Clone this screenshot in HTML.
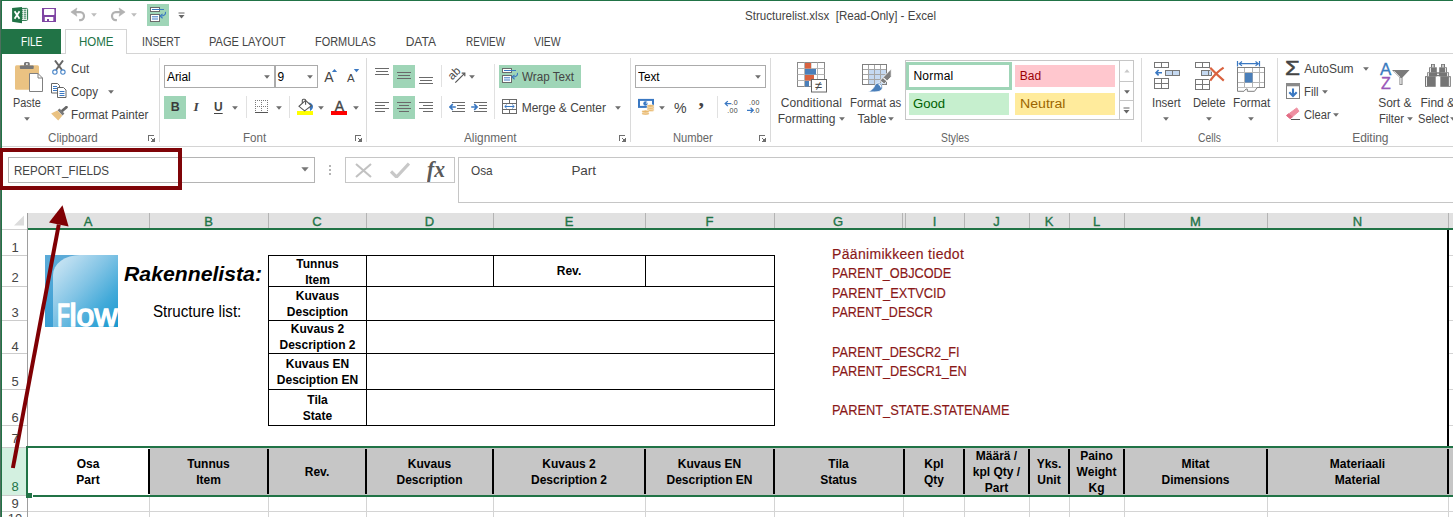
<!DOCTYPE html>
<html lang="en"><head><meta charset="utf-8"><title>Structurelist.xlsx [Read-Only] - Excel</title><style>
html,body{margin:0;padding:0;background:#fff;}
body{width:1453px;height:517px;overflow:hidden;position:relative;font-family:"Liberation Sans",sans-serif;}
.b{position:absolute;box-sizing:border-box;display:block;}
.t{position:absolute;white-space:pre;line-height:normal;display:block;}
</style></head>
<body>
<div class="b" style="left:0px;top:0px;width:1453px;height:1px;background:#217346;"></div>
<div class="b" style="left:0px;top:0px;width:1px;height:517px;background:#4d6f5d;"></div>
<div class="b" style="left:1px;top:0px;width:1px;height:517px;background:#217346;"></div>
<svg class="b" style="left:12px;top:7px;" width="17" height="17" viewBox="0 0 17 17"><rect x="9" y="1.400" width="6.600" height="12" rx="1" fill="#fff" stroke="#217346" stroke-width="1"/><g fill="#217346"><rect x="9.9" y="2.7" width="1.4" height="1"/><rect x="12" y="2.7" width="2.3" height="1"/><rect x="9.9" y="4.7" width="1.4" height="1"/><rect x="12" y="4.7" width="2.3" height="1"/><rect x="9.9" y="6.7" width="1.4" height="1"/><rect x="12" y="6.7" width="2.3" height="1"/><rect x="9.9" y="8.6" width="1.4" height="1"/><rect x="12" y="8.6" width="2.3" height="1"/><rect x="9.9" y="10.6" width="1.4" height="1"/><rect x="12" y="10.6" width="2.3" height="1"/></g><path d="M0.100 1 L10 0 V16.200 L0.100 14.800Z" fill="#217346"/><path d="M2.600 4.200 L7.500 11.700 M7.500 4.200 L2.600 11.700" stroke="#fff" stroke-width="1.800" fill="none"/></svg>
<svg class="b" style="left:42px;top:8px;" width="14" height="14" viewBox="0 0 14 14"><path d="M0 0h14v14H0z" fill="#7f45a3"/><rect x="2" y="1.100" width="10.400" height="5.800" rx="0.600" fill="#fff"/><rect x="2.800" y="9" width="8.500" height="4" fill="#fff"/><rect x="5" y="11" width="2" height="2" fill="#7f45a3"/></svg>
<svg class="b" style="left:70px;top:7px;" width="16" height="15" viewBox="0 0 16 15"><path d="M4 5.100 H10.300 A3.700 4 0 0 1 10.300 13.100 H9.100" fill="none" stroke="#b2b2b2" stroke-width="2.200"/><path d="M0.900 5.100 L6.900 1 L5.800 5.100 L6.900 9.200Z" fill="#b2b2b2" stroke="#b2b2b2" stroke-width="0.600" stroke-linejoin="round"/></svg>
<svg class="b" style="left:91px;top:13px;" width="6" height="4" viewBox="0 0 6 4"><path d="M0.1 0.3h5.8l-2.9 3.4z" fill="#bdbdbd"/></svg>
<svg class="b" style="left:110px;top:7px;" width="16" height="15" viewBox="0 0 16 15"><path d="M12 5.100 H5.700 A3.700 4 0 0 0 5.700 13.100 H6.900" fill="none" stroke="#b2b2b2" stroke-width="2.200"/><path d="M15.100 5.100 L9.100 1 L10.200 5.100 L9.100 9.200Z" fill="#b2b2b2" stroke="#b2b2b2" stroke-width="0.600" stroke-linejoin="round"/></svg>
<svg class="b" style="left:131px;top:13px;" width="6" height="4" viewBox="0 0 6 4"><path d="M0.1 0.3h5.8l-2.9 3.4z" fill="#bdbdbd"/></svg>
<div class="b" style="left:147px;top:4px;width:22px;height:22px;background:#9fd5b7;"></div>
<svg class="b" style="left:150px;top:7px;" width="17" height="16" viewBox="0 0 17 16"><rect x="0.5" y="0.5" width="9" height="4" fill="#fff" stroke="#6a6a6a"/><rect x="0.5" y="7.5" width="9" height="7" fill="#fff" stroke="#6a6a6a"/><path d="M2 2.5h12 M2 9.8h6 M2 12h6" stroke="#3a78c2" stroke-width="1" fill="none"/><path d="M15.5 4.8 C15.9 7.4 14.2 9 10.6 9.1" stroke="#3a78c2" stroke-width="1.1" fill="none"/><path d="M12.6 6.900 L10 9.100 L12.600 11.200" stroke="#3a78c2" stroke-width="1.100" fill="none"/></svg>
<svg class="b" style="left:178px;top:12px;" width="7" height="7" viewBox="0 0 7 7"><path d="M0.5 1h6" stroke="#666" stroke-width="1"/><path d="M0.5 3h6l-3 3.5z" fill="#666"/></svg>
<div class="b" style="left:2px;top:53px;width:1451px;height:1px;background:#d4d4d4;"></div>
<div class="b" style="left:2px;top:29px;width:59px;height:25px;background:#217346;"></div>
<div class="b" style="left:65px;top:29px;width:62px;height:25px;background:#fff;border:1px solid #d4d4d4;border-bottom:none;"></div>
<div class="b" style="left:2px;top:146px;width:1451px;height:1px;background:#d4d4d4;"></div>
<div class="b" style="left:159px;top:58px;width:1px;height:84px;background:#dadada;"></div>
<div class="b" style="left:366px;top:58px;width:1px;height:84px;background:#dadada;"></div>
<div class="b" style="left:630px;top:58px;width:1px;height:84px;background:#dadada;"></div>
<div class="b" style="left:770px;top:58px;width:1px;height:84px;background:#dadada;"></div>
<div class="b" style="left:1141px;top:58px;width:1px;height:84px;background:#dadada;"></div>
<div class="b" style="left:1277px;top:58px;width:1px;height:84px;background:#dadada;"></div>
<svg class="b" style="left:148px;top:135px;" width="7" height="7" viewBox="0 0 7 7"><g fill="#6e6e6e" shape-rendering="crispEdges"><rect x="0" y="0" width="6" height="1"/><rect x="0" y="0" width="1" height="6"/><rect x="3" y="3" width="1" height="1"/><rect x="4" y="4" width="2" height="2"/><rect x="6" y="3" width="1" height="4"/><rect x="3" y="6" width="4" height="1"/></g></svg>
<svg class="b" style="left:355px;top:135px;" width="7" height="7" viewBox="0 0 7 7"><g fill="#6e6e6e" shape-rendering="crispEdges"><rect x="0" y="0" width="6" height="1"/><rect x="0" y="0" width="1" height="6"/><rect x="3" y="3" width="1" height="1"/><rect x="4" y="4" width="2" height="2"/><rect x="6" y="3" width="1" height="4"/><rect x="3" y="6" width="4" height="1"/></g></svg>
<svg class="b" style="left:619px;top:135px;" width="7" height="7" viewBox="0 0 7 7"><g fill="#6e6e6e" shape-rendering="crispEdges"><rect x="0" y="0" width="6" height="1"/><rect x="0" y="0" width="1" height="6"/><rect x="3" y="3" width="1" height="1"/><rect x="4" y="4" width="2" height="2"/><rect x="6" y="3" width="1" height="4"/><rect x="3" y="6" width="4" height="1"/></g></svg>
<svg class="b" style="left:759px;top:135px;" width="7" height="7" viewBox="0 0 7 7"><g fill="#6e6e6e" shape-rendering="crispEdges"><rect x="0" y="0" width="6" height="1"/><rect x="0" y="0" width="1" height="6"/><rect x="3" y="3" width="1" height="1"/><rect x="4" y="4" width="2" height="2"/><rect x="6" y="3" width="1" height="4"/><rect x="3" y="6" width="4" height="1"/></g></svg>
<svg class="b" style="left:14px;top:62px;" width="30" height="30" viewBox="0 0 30 30"><rect x="1" y="3.3" width="24" height="24.400" rx="1.500" fill="#eac282"/><rect x="5.900" y="3.500" width="13.800" height="3.500" rx="0.800" fill="#777"/><path d="M10 3.800V1.600a1.500 1.500 0 0 1 1.500-1.500h2.800a1.500 1.500 0 0 1 1.500 1.500V3.800z" fill="#777"/><rect x="12" y="1.300" width="1.800" height="1.500" fill="#fff"/><path d="M15.500 11.500h8.500l4.500 4.500V29.500h-13z" fill="#fff" stroke="#808080"/><path d="M24 11.500v4.500h4.500" fill="none" stroke="#808080"/></svg>
<svg class="b" style="left:24px;top:117px;" width="6" height="4" viewBox="0 0 6 4"><path d="M0.1 0.3h5.8l-2.9 3.4z" fill="#6e6e6e"/></svg>
<svg class="b" style="left:51px;top:60px;" width="16" height="15" viewBox="0 0 16 15"><path d="M4 0.5 L11 10 M12 0.5 L5 10" stroke="#666" stroke-width="2" fill="none"/><circle cx="3.900" cy="12.100" r="2.200" fill="none" stroke="#4a86c8" stroke-width="1.100"/><circle cx="11.900" cy="12.100" r="2.200" fill="none" stroke="#4a86c8" stroke-width="1.100"/></svg>
<svg class="b" style="left:51px;top:83px;" width="16" height="15" viewBox="0 0 16 15"><path d="M0.5 0.5h6l2 2v7.5h-8z" fill="#fff" stroke="#666"/><path d="M2 3.5h4M2 5.5h4M2 7.5h4" stroke="#3a78c2"/><path d="M6.5 4.5h6l2.5 2.5v7.5h-8.5z" fill="#fff" stroke="#666"/><path d="M8.5 8.5h5M8.5 10.5h5M8.5 12.5h5" stroke="#3a78c2"/></svg>
<svg class="b" style="left:108px;top:90px;" width="6" height="4" viewBox="0 0 6 4"><path d="M0.1 0.3h5.8l-2.9 3.4z" fill="#6e6e6e"/></svg>
<svg class="b" style="left:51px;top:106px;" width="17" height="16" viewBox="0 0 17 16"><path d="M11.300 4.700 L15.400 1.200" stroke="#666" stroke-width="2.800" stroke-linecap="round"/><path d="M6.500 4.300 L8.600 2.400 L13.400 7.600 L11.500 9.500Z" fill="#7a7a7a"/><path d="M0.100 7.400 L6.300 4.500 L11.300 9.700 L7.200 14.600Z" fill="#eac282"/></svg>
<div class="b" style="left:164px;top:65px;width:111px;height:23px;background:#fff;border:1px solid #ababab;"></div>
<div class="b" style="left:275px;top:65px;width:43px;height:23px;background:#fff;border:1px solid #ababab;"></div>
<svg class="b" style="left:264px;top:75px;" width="6" height="4" viewBox="0 0 6 4"><path d="M0.1 0.3h5.8l-2.9 3.4z" fill="#6e6e6e"/></svg>
<svg class="b" style="left:307px;top:75px;" width="6" height="4" viewBox="0 0 6 4"><path d="M0.1 0.3h5.8l-2.9 3.4z" fill="#6e6e6e"/></svg>
<svg class="b" style="left:331px;top:69px;" width="7" height="4" viewBox="0 0 7 4"><path d="M0.900 3.100h5.200l-2.600-3.100z" fill="#3a78c2"/></svg>
<svg class="b" style="left:353px;top:69px;" width="7" height="4" viewBox="0 0 7 4"><path d="M0.800 0h5.400l-2.700 3.200z" fill="#3a78c2"/></svg>
<div class="b" style="left:164px;top:96px;width:22px;height:23px;background:#9fd5b7;"></div>
<svg class="b" style="left:232px;top:106px;" width="6" height="4" viewBox="0 0 6 4"><path d="M0.1 0.3h5.8l-2.9 3.4z" fill="#6e6e6e"/></svg>
<div class="b" style="left:246px;top:96px;width:1px;height:22px;background:#e1e1e1;"></div>
<svg class="b" style="left:255px;top:100px;" width="14" height="14" viewBox="0 0 14 14"><g shape-rendering="crispEdges" fill="none" stroke="#7a7a7a" stroke-width="1" stroke-dasharray="1 1"><path d="M0 0.500h13M0 6.500h13M0.500 0v12M6.500 0v12M12.500 0v12"/></g><rect x="0" y="12" width="13" height="1" fill="#555" shape-rendering="crispEdges"/></svg>
<svg class="b" style="left:276px;top:106px;" width="6" height="4" viewBox="0 0 6 4"><path d="M0.1 0.3h5.8l-2.9 3.4z" fill="#6e6e6e"/></svg>
<div class="b" style="left:289px;top:96px;width:1px;height:22px;background:#e1e1e1;"></div>
<svg class="b" style="left:297px;top:98px;" width="17" height="18" viewBox="0 0 17 18"><rect x="0" y="13" width="16" height="4" fill="#ffff00"/><path d="M11.800 4.600 C15.200 5.200 16.800 7.800 15.700 10.200 C15.200 11.400 14.300 12.300 13.200 12.900 Z" fill="#3a78c2"/><path d="M8.500 2.400 L14.400 7.800 L7.600 12.900 L2 8.300Z" fill="#fff" stroke="#555" stroke-width="1.100"/><path d="M5.300 5.200V2.300a1 1 0 0 1 1-1h1.300a1 1 0 0 1 1 1V6.800" fill="none" stroke="#555" stroke-width="1.100"/></svg>
<svg class="b" style="left:318px;top:106px;" width="6" height="4" viewBox="0 0 6 4"><path d="M0.1 0.3h5.8l-2.9 3.4z" fill="#6e6e6e"/></svg>
<div class="b" style="left:331px;top:111px;width:16px;height:4px;background:#ff0000;"></div>
<svg class="b" style="left:353px;top:106px;" width="6" height="4" viewBox="0 0 6 4"><path d="M0.1 0.3h5.8l-2.9 3.4z" fill="#6e6e6e"/></svg>
<div class="b" style="left:393px;top:65px;width:22px;height:23px;background:#9fd5b7;"></div>
<svg class="b" style="left:375px;top:68px;shape-rendering:crispEdges;" width="16" height="12" viewBox="0 0 16 12"><rect x="0" y="0" width="14" height="1" fill="#6a6a6a"/><rect x="1" y="3" width="12" height="1" fill="#6a6a6a"/><rect x="0" y="6" width="14" height="1" fill="#6a6a6a"/></svg>
<svg class="b" style="left:397px;top:72px;shape-rendering:crispEdges;" width="16" height="12" viewBox="0 0 16 12"><rect x="0" y="0" width="14" height="1" fill="#6a6a6a"/><rect x="1" y="3" width="12" height="1" fill="#6a6a6a"/><rect x="0" y="6" width="14" height="1" fill="#6a6a6a"/></svg>
<svg class="b" style="left:419px;top:77px;shape-rendering:crispEdges;" width="16" height="12" viewBox="0 0 16 12"><rect x="0" y="0" width="14" height="1" fill="#6a6a6a"/><rect x="1" y="3" width="12" height="1" fill="#6a6a6a"/><rect x="0" y="6" width="14" height="1" fill="#6a6a6a"/></svg>
<div class="b" style="left:441px;top:65px;width:1px;height:22px;background:#e1e1e1;"></div>
<svg class="b" style="left:448px;top:64px;" width="19" height="22" viewBox="0 0 19 22"><path d="M7.300 18.600 L16.600 9.300" stroke="#555" stroke-width="1.200"/><path d="M13.700 9.100 L16.800 9.100 L16.800 12.200" fill="none" stroke="#555" stroke-width="1.200"/><text x="0" y="0" font-size="11.500" fill="#444" transform="translate(4.200,16.500) rotate(-45)" font-family="Liberation Sans, sans-serif">ab</text></svg>
<svg class="b" style="left:469px;top:75px;" width="6" height="4" viewBox="0 0 6 4"><path d="M0.1 0.3h5.8l-2.9 3.4z" fill="#6e6e6e"/></svg>
<div class="b" style="left:393px;top:96px;width:22px;height:23px;background:#9fd5b7;"></div>
<svg class="b" style="left:375px;top:102px;shape-rendering:crispEdges;" width="16" height="12" viewBox="0 0 16 12"><rect x="0" y="0" width="14" height="1" fill="#6a6a6a"/><rect x="0" y="3" width="10" height="1" fill="#6a6a6a"/><rect x="0" y="6" width="14" height="1" fill="#6a6a6a"/><rect x="0" y="9" width="10" height="1" fill="#6a6a6a"/></svg>
<svg class="b" style="left:397px;top:102px;shape-rendering:crispEdges;" width="16" height="12" viewBox="0 0 16 12"><rect x="0" y="0" width="14" height="1" fill="#6a6a6a"/><rect x="2" y="3" width="10" height="1" fill="#6a6a6a"/><rect x="0" y="6" width="14" height="1" fill="#6a6a6a"/><rect x="2" y="9" width="10" height="1" fill="#6a6a6a"/></svg>
<svg class="b" style="left:419px;top:102px;shape-rendering:crispEdges;" width="16" height="12" viewBox="0 0 16 12"><rect x="0" y="0" width="14" height="1" fill="#6a6a6a"/><rect x="4" y="3" width="10" height="1" fill="#6a6a6a"/><rect x="0" y="6" width="14" height="1" fill="#6a6a6a"/><rect x="4" y="9" width="10" height="1" fill="#6a6a6a"/></svg>
<div class="b" style="left:441px;top:96px;width:1px;height:22px;background:#e1e1e1;"></div>
<svg class="b" style="left:449px;top:101px;" width="17" height="12" viewBox="0 0 17 12"><g shape-rendering="crispEdges" fill="#6a6a6a"><rect x="3" y="1" width="13" height="1"/><rect x="8" y="4" width="8" height="1"/><rect x="8" y="7" width="8" height="1"/><rect x="3" y="10" width="13" height="1"/></g><path d="M0.8 6H6.8 M3.8 3.2 L0.9 6 L3.8 8.800" stroke="#3a78c2" stroke-width="1.600" fill="none"/></svg>
<svg class="b" style="left:471px;top:101px;" width="17" height="12" viewBox="0 0 17 12"><g shape-rendering="crispEdges" fill="#6a6a6a"><rect x="3" y="1" width="13" height="1"/><rect x="8" y="4" width="8" height="1"/><rect x="8" y="7" width="8" height="1"/><rect x="3" y="10" width="13" height="1"/></g><path d="M0.2 6H6.2 M3.2 3.2 L6.100 6 L3.2 8.800" stroke="#3a78c2" stroke-width="1.600" fill="none"/></svg>
<div class="b" style="left:494px;top:64px;width:1px;height:55px;background:#e1e1e1;"></div>
<div class="b" style="left:499px;top:65px;width:82px;height:23px;background:#9fd5b7;"></div>
<svg class="b" style="left:502px;top:68px;" width="17" height="16" viewBox="0 0 17 16"><rect x="0.5" y="0.5" width="9" height="4" fill="#fff" stroke="#6a6a6a"/><rect x="0.5" y="7.5" width="9" height="7" fill="#fff" stroke="#6a6a6a"/><path d="M2 2.5h12 M2 9.8h6 M2 12h6" stroke="#3a78c2" stroke-width="1" fill="none"/><path d="M15.5 4.8 C15.9 7.4 14.2 9 10.6 9.1" stroke="#3a78c2" stroke-width="1.1" fill="none"/><path d="M12.6 6.900 L10 9.100 L12.600 11.200" stroke="#3a78c2" stroke-width="1.100" fill="none"/></svg>
<svg class="b" style="left:502px;top:99px;" width="16" height="15" viewBox="0 0 16 15"><rect x="0.5" y="0.5" width="14" height="14" fill="#fff" stroke="#6a6a6a"/><path d="M0.5 4.5h14M0.5 10.5h14M7.5 0.5v4M7.5 10.5v4" stroke="#6a6a6a"/><path d="M2.800 7.500h9.400M4.800 5.600L2.800 7.500l2 1.900M10.200 5.600l2 1.900l-2 1.900" stroke="#3a78c2" fill="none"/></svg>
<svg class="b" style="left:615px;top:106px;" width="6" height="4" viewBox="0 0 6 4"><path d="M0.1 0.3h5.8l-2.9 3.4z" fill="#6e6e6e"/></svg>
<div class="b" style="left:635px;top:65px;width:131px;height:23px;background:#fff;border:1px solid #ababab;"></div>
<svg class="b" style="left:755px;top:75px;" width="6" height="4" viewBox="0 0 6 4"><path d="M0.1 0.3h5.8l-2.9 3.4z" fill="#6e6e6e"/></svg>
<svg class="b" style="left:637px;top:98px;" width="18" height="18" viewBox="0 0 18 18"><rect x="2" y="1.9" width="14" height="7" fill="#fff" stroke="#3a78c2" stroke-width="2"/><circle cx="8.5" cy="5.5" r="2.2" fill="#3a78c2"/><path d="M8.5 5.5h2.2v-2.2z" fill="#fff"/><g fill="#e9b96e" stroke="#fff" stroke-width="0.5"><ellipse cx="13.5" cy="11.9" rx="3.7" ry="1.5"/><ellipse cx="13.5" cy="9.9" rx="3.7" ry="1.5"/><ellipse cx="13.5" cy="7.9" rx="3.7" ry="1.5"/><ellipse cx="8.5" cy="15.6" rx="3.7" ry="1.5"/><ellipse cx="8.5" cy="13.6" rx="3.7" ry="1.5"/></g></svg>
<svg class="b" style="left:659px;top:106px;" width="6" height="4" viewBox="0 0 6 4"><path d="M0.1 0.3h5.8l-2.9 3.4z" fill="#6e6e6e"/></svg>
<div class="b" style="left:717px;top:96px;width:1px;height:22px;background:#e1e1e1;"></div>
<svg class="b" style="left:724px;top:100px;" width="17" height="14" viewBox="0 0 17 14"><path d="M1.2 3.6H7.4M3.8 1.1L1.2 3.6l2.6 2.5" stroke="#3a78c2" stroke-width="1.3" fill="none"/><text x="7.5" y="5.3" font-size="7" letter-spacing="0.35" fill="#444" font-family="Liberation Sans, sans-serif">.0</text><text x="3.2" y="13" font-size="7" letter-spacing="0.35" fill="#444" font-family="Liberation Sans, sans-serif">.00</text></svg>
<svg class="b" style="left:746px;top:100px;" width="17" height="14" viewBox="0 0 17 14"><text x="2.9" y="5.3" font-size="7" letter-spacing="0.35" fill="#444" font-family="Liberation Sans, sans-serif">.00</text><path d="M1 10.3H7.2M4.600 7.800L7.2 10.3l-2.600 2.500" stroke="#3a78c2" stroke-width="1.3" fill="none"/><text x="7.300" y="13" font-size="7" letter-spacing="0.35" fill="#444" font-family="Liberation Sans, sans-serif">.0</text></svg>
<svg class="b" style="left:797px;top:62px;" width="31" height="31" viewBox="0 0 31 31"><rect x="0.5" y="0.5" width="27" height="24" fill="#fff" stroke="#8a8a8a"/><path d="M7.5 0.5v24M14 0.5v24M20.5 0.5v24M0.5 6.5h27M0.5 12.5h27M0.5 18.5h27" stroke="#b5b5b5"/><rect x="8" y="1" width="6" height="5.5" fill="#d9623f"/><rect x="8" y="7" width="11" height="5.5" fill="#4a7fba"/><rect x="8" y="13" width="9" height="5.5" fill="#d9623f"/><rect x="8" y="19" width="4" height="5.5" fill="#4a7fba"/><rect x="14.5" y="17.5" width="15" height="12.5" fill="#fff" stroke="#666"/><text x="17.8" y="28.3" font-size="13" fill="#444" font-family="Liberation Sans, sans-serif">≠</text></svg>
<svg class="b" style="left:839px;top:117px;" width="6" height="4" viewBox="0 0 6 4"><path d="M0.1 0.3h5.8l-2.9 3.4z" fill="#6e6e6e"/></svg>
<svg class="b" style="left:862px;top:64px;" width="31" height="29" viewBox="0 0 31 29"><rect x="0.5" y="0.5" width="24" height="20" fill="#fff" stroke="#7f7f7f"/><rect x="6.5" y="5.5" width="18" height="15" fill="#c5d9f1"/><path d="M6.5 0.5v20M12.5 0.5v20M18.5 0.5v20M0.5 5.5h24M0.5 10.5h24M0.5 15.5h24" stroke="#a6a6a6" fill="none"/><rect x="0.5" y="0.5" width="24" height="20" fill="none" stroke="#7f7f7f"/><path d="M29.2 5.0 L29.2 12.8 L22.2 19.9 L18 16.6Z" fill="#7f7f7f" stroke="#fff" stroke-width="0.8"/><path d="M21.4 13.8 L25 17.2" stroke="#fff" stroke-width="1.1"/><path d="M6.2 27.9 C10 26 11.8 24 12.6 21.8 C13.6 18.8 17.6 18.2 19.6 20.5 C21.5 23 20.2 26.3 17 27.4 C15 28 10 27.9 6.2 27.9Z" fill="#4a7fba" stroke="#fff" stroke-width="0.8"/><path d="M16.6 20.4 q2.4 0.4 2.4 3.2" stroke="#fff" stroke-width="1.2" fill="none"/></svg>
<svg class="b" style="left:888px;top:117px;" width="6" height="4" viewBox="0 0 6 4"><path d="M0.1 0.3h5.8l-2.9 3.4z" fill="#6e6e6e"/></svg>
<div class="b" style="left:905px;top:60px;width:229px;height:60px;background:#fff;border:1px solid #c6c6c6;"></div>
<div class="b" style="left:906px;top:62px;width:106px;height:28px;background:#9fd5b7;"></div>
<div class="b" style="left:909px;top:65px;width:100px;height:22px;background:#fff;"></div>
<div class="b" style="left:1015px;top:65px;width:100px;height:22px;background:#ffc7ce;"></div>
<div class="b" style="left:909px;top:93px;width:100px;height:22px;background:#c6efce;"></div>
<div class="b" style="left:1015px;top:93px;width:100px;height:22px;background:#ffeb9c;"></div>
<div class="b" style="left:1119px;top:60px;width:1px;height:60px;background:#c6c6c6;"></div>
<div class="b" style="left:1119px;top:81px;width:15px;height:1px;background:#c6c6c6;"></div>
<div class="b" style="left:1119px;top:100px;width:15px;height:1px;background:#c6c6c6;"></div>
<svg class="b" style="left:1124px;top:69px;" width="6" height="4" viewBox="0 0 6 4"><path d="M0.3 3.6h5.4l-2.7-3.4z" fill="#c8c8c8"/></svg>
<svg class="b" style="left:1124px;top:90px;" width="6" height="4" viewBox="0 0 6 4"><path d="M0.1 0.3h5.8l-2.9 3.4z" fill="#666"/></svg>
<svg class="b" style="left:1123px;top:107px;" width="7" height="7" viewBox="0 0 7 7"><path d="M0.5 1h6" stroke="#666" stroke-width="1"/><path d="M0.5 3h6l-3 3.5z" fill="#666"/></svg>
<svg class="b" style="left:1154px;top:62px;" width="26" height="27" viewBox="0 0 26 27"><rect x="0.5" y="0.5" width="14" height="5" fill="#fff" stroke="#777"/><path d="M7.5 0.5v5" stroke="#777"/><rect x="11.5" y="8.5" width="14" height="5" fill="#c5d9f1" stroke="#777"/><path d="M18.5 8.5v5" stroke="#777"/><rect x="0.5" y="16.5" width="14" height="10" fill="#fff" stroke="#777"/><path d="M7.5 16.5v10M0.5 21.5h14" stroke="#777"/><path d="M2 10.7h6M4.6 8L2 10.7l2.6 2.7" stroke="#3a78c2" stroke-width="1.6" fill="none"/></svg>
<svg class="b" style="left:1163px;top:117px;" width="6" height="4" viewBox="0 0 6 4"><path d="M0.1 0.3h5.8l-2.9 3.4z" fill="#6e6e6e"/></svg>
<svg class="b" style="left:1195px;top:62px;" width="31" height="29" viewBox="0 0 31 29"><rect x="0.5" y="0.5" width="14" height="5" fill="#fff" stroke="#777"/><path d="M7.5 0.5v5" stroke="#777"/><rect x="6.5" y="8.5" width="10" height="5" fill="#c5d9f1" stroke="#777"/><path d="M13.500 8.500v5" stroke="#777"/><rect x="0.5" y="17.5" width="14" height="10" fill="#fff" stroke="#777"/><path d="M7.5 17.5v10M0.5 22.5h14" stroke="#777"/><path d="M15.200 5.800 Q21 12 28.800 18.600 M28.600 5.600 Q21 10.500 15.200 18.600" stroke="#fff" stroke-width="3.600" fill="none"/><path d="M15.200 5.800 Q21 12 28.800 18.600 M28.600 5.600 Q21 10.500 15.200 18.600" stroke="#d9623f" stroke-width="2.200" fill="none"/></svg>
<svg class="b" style="left:1206px;top:117px;" width="6" height="4" viewBox="0 0 6 4"><path d="M0.1 0.3h5.8l-2.9 3.4z" fill="#6e6e6e"/></svg>
<svg class="b" style="left:1236px;top:61px;" width="30" height="32" viewBox="0 0 30 32"><path d="M1.500 0v5.500M23.500 0v5.500M3 2.700h19M6 0.500L3.200 2.700l2.800 2.200M19.500 0.500l2.800 2.200l-2.800 2.200" stroke="#3a78c2" stroke-width="1.200" fill="none"/><rect x="1.500" y="6.500" width="27" height="20" fill="#fff" stroke="#808080"/><path d="M8.500 6.500v20M16.500 6.500v20M23.500 6.500v20M1.500 11.500h27M1.500 21.500h27" stroke="#b5b5b5"/><rect x="1.500" y="6.500" width="27" height="20" fill="none" stroke="#808080"/><rect x="9" y="12" width="7.500" height="9.500" fill="#4a7fba"/><path d="M1.500 26.500v3.800h6.500l2-2.300h1.300v2.300h7.200l2.800-3.800" fill="#fff" stroke="#808080"/></svg>
<svg class="b" style="left:1248px;top:117px;" width="6" height="4" viewBox="0 0 6 4"><path d="M0.1 0.3h5.8l-2.9 3.4z" fill="#6e6e6e"/></svg>
<svg class="b" style="left:1363px;top:67px;" width="6" height="4" viewBox="0 0 6 4"><path d="M0.1 0.3h5.8l-2.9 3.4z" fill="#6e6e6e"/></svg>
<svg class="b" style="left:1285px;top:83px;" width="16" height="16" viewBox="0 0 16 16"><rect x="1.5" y="0.5" width="13" height="15" fill="#fff" stroke="#808080"/><rect x="1" y="0" width="14" height="3.3" fill="#8a8a8a"/><path d="M8 5.400v7.200M4.300 9.200l3.700 3.700l3.700-3.700" stroke="#3a78c2" stroke-width="2.100" fill="none"/></svg>
<svg class="b" style="left:1322px;top:90px;" width="6" height="4" viewBox="0 0 6 4"><path d="M0.1 0.3h5.8l-2.9 3.4z" fill="#6e6e6e"/></svg>
<svg class="b" style="left:1286px;top:107px;" width="15" height="14" viewBox="0 0 15 14"><path d="M10.800 0.900 L12.900 4.300 L4.300 11.600 L0.600 8.500 Z" fill="#ee8fa1" stroke="#ee8fa1" stroke-width="1" stroke-linejoin="round"/><path d="M0.600 8.500 L4.300 11.600 L6.300 9.900 L2.600 6.900Z" fill="#e26d85" stroke="#e26d85" stroke-width="1" stroke-linejoin="round"/><path d="M5 12.500H14" stroke="#555"/></svg>
<svg class="b" style="left:1333px;top:113px;" width="6" height="4" viewBox="0 0 6 4"><path d="M0.1 0.3h5.8l-2.9 3.4z" fill="#6e6e6e"/></svg>
<svg class="b" style="left:1392px;top:69px;" width="18" height="17" viewBox="0 0 18 17"><path d="M0 1h17.5l-7 7.500v7.500h-3v-7.500z" fill="#7a7a7a"/><path d="M8.300 9v6.300h1.200V9" fill="#fff"/><path d="M2 2.200 L8 8.300" stroke="#fff" stroke-width="0.900"/></svg>
<svg class="b" style="left:1407px;top:117px;" width="6" height="4" viewBox="0 0 6 4"><path d="M0.1 0.3h5.8l-2.9 3.4z" fill="#6e6e6e"/></svg>
<svg class="b" style="left:1425px;top:64px;" width="28" height="23" viewBox="0 0 28 23"><g fill="#757575"><rect x="6" y="0" width="3.900" height="3.500"/><rect x="4.100" y="3.300" width="7.700" height="5.200"/><rect x="2.200" y="8.300" width="9.600" height="4.100"/><rect x="0" y="12.200" width="10.700" height="10.600"/><rect x="16.100" y="0" width="3.900" height="3.500"/><rect x="14.200" y="3.300" width="7.700" height="5.200"/><rect x="14.200" y="8.300" width="9.600" height="4.100"/><rect x="15.300" y="12.200" width="10.500" height="10.600"/><rect x="10.700" y="8.300" width="4.600" height="3.900"/></g><g fill="#fff"><rect x="12" y="9.700" width="2" height="1.100"/><rect x="1" y="13.200" width="0.900" height="8.800"/><rect x="23.900" y="13.200" width="0.900" height="8.800"/><rect x="3.100" y="9" width="0.800" height="3.200"/><rect x="22.100" y="9" width="0.800" height="3.200"/><rect x="5" y="4" width="0.800" height="4.200"/><rect x="20.200" y="4" width="0.800" height="4.200"/><rect x="7.300" y="0.700" width="1.200" height="2.600"/><rect x="17.400" y="0.700" width="1.200" height="2.600"/></g></svg>
<svg class="b" style="left:1450px;top:117px;" width="6" height="4" viewBox="0 0 6 4"><path d="M0.1 0.3h5.8l-2.9 3.4z" fill="#6e6e6e"/></svg>
<div class="b" style="left:8px;top:157px;width:307px;height:26px;background:#fff;border:1px solid #b4b4b4;"></div>
<svg class="b" style="left:301px;top:167px;" width="8" height="5" viewBox="0 0 8 5"><path d="M0.300 0.300h7.400l-3.700 4.200z" fill="#777"/></svg>
<div class="b" style="left:329px;top:165px;width:2px;height:2px;background:#b4b4b4;"></div>
<div class="b" style="left:329px;top:169px;width:2px;height:2px;background:#b4b4b4;"></div>
<div class="b" style="left:329px;top:173px;width:2px;height:2px;background:#b4b4b4;"></div>
<div class="b" style="left:345px;top:157px;width:110px;height:26px;background:#fff;border:1px solid #c6c6c6;"></div>
<svg class="b" style="left:355px;top:163px;" width="17" height="15" viewBox="0 0 17 15"><path d="M1 1L16 14M16 1L1 14" stroke="#c2c2c2" stroke-width="2.100" fill="none"/></svg>
<svg class="b" style="left:390px;top:162px;" width="20" height="16" viewBox="0 0 20 16"><path d="M1 9.500L6.500 15L19 1.500" stroke="#c8c8c8" stroke-width="3.200" fill="none"/></svg>
<div class="b" style="left:458px;top:157px;width:1000px;height:46px;background:#fff;border:1px solid #c6c6c6;"></div>
<div class="b" style="left:28px;top:213px;width:1425px;height:15px;background:#e1e1e1;"></div>
<div class="b" style="left:149px;top:213px;width:1px;height:15px;background:#b4b4b4;"></div>
<div class="b" style="left:268px;top:213px;width:1px;height:15px;background:#b4b4b4;"></div>
<div class="b" style="left:366px;top:213px;width:1px;height:15px;background:#b4b4b4;"></div>
<div class="b" style="left:493px;top:213px;width:1px;height:15px;background:#b4b4b4;"></div>
<div class="b" style="left:645px;top:213px;width:1px;height:15px;background:#b4b4b4;"></div>
<div class="b" style="left:774px;top:213px;width:1px;height:15px;background:#b4b4b4;"></div>
<div class="b" style="left:902px;top:213px;width:1px;height:15px;background:#b4b4b4;"></div>
<div class="b" style="left:964px;top:213px;width:1px;height:15px;background:#b4b4b4;"></div>
<div class="b" style="left:1029px;top:213px;width:1px;height:15px;background:#b4b4b4;"></div>
<div class="b" style="left:1069px;top:213px;width:1px;height:15px;background:#b4b4b4;"></div>
<div class="b" style="left:1124px;top:213px;width:1px;height:15px;background:#b4b4b4;"></div>
<div class="b" style="left:1267px;top:213px;width:1px;height:15px;background:#b4b4b4;"></div>
<div class="b" style="left:1448px;top:213px;width:1px;height:15px;background:#b4b4b4;"></div>
<div class="b" style="left:905px;top:213px;width:1px;height:15px;background:#b4b4b4;"></div>
<svg class="b" style="left:13px;top:215px;" width="12" height="11" viewBox="0 0 12 11"><path d="M11 0.500V10.500H1Z" fill="#dcdcdc"/></svg>
<div class="b" style="left:28px;top:228px;width:1425px;height:2px;background:#217346;"></div>
<div class="b" style="left:27px;top:213px;width:1px;height:304px;background:#9e9e9e;"></div>
<div class="b" style="left:2px;top:229px;width:25px;height:1px;background:#d0d0d0;"></div>
<div class="b" style="left:2px;top:255px;width:25px;height:1px;background:#c6c6c6;"></div>
<div class="b" style="left:2px;top:255px;width:25px;height:1px;background:#cccccc;"></div>
<div class="b" style="left:2px;top:286px;width:25px;height:1px;background:#c6c6c6;"></div>
<div class="b" style="left:2px;top:286px;width:25px;height:1px;background:#cccccc;"></div>
<div class="b" style="left:2px;top:320px;width:25px;height:1px;background:#c6c6c6;"></div>
<div class="b" style="left:2px;top:320px;width:25px;height:1px;background:#cccccc;"></div>
<div class="b" style="left:2px;top:353px;width:25px;height:1px;background:#c6c6c6;"></div>
<div class="b" style="left:2px;top:353px;width:25px;height:1px;background:#cccccc;"></div>
<div class="b" style="left:2px;top:389px;width:25px;height:1px;background:#c6c6c6;"></div>
<div class="b" style="left:2px;top:389px;width:25px;height:1px;background:#cccccc;"></div>
<div class="b" style="left:2px;top:425px;width:25px;height:1px;background:#c6c6c6;"></div>
<div class="b" style="left:2px;top:425px;width:25px;height:1px;background:#cccccc;"></div>
<div class="b" style="left:2px;top:447px;width:25px;height:1px;background:#cccccc;"></div>
<div class="b" style="left:2px;top:448px;width:24px;height:47px;background:#d3f0e0;"></div>
<div class="b" style="left:2px;top:495px;width:25px;height:1px;background:#cccccc;"></div>
<div class="b" style="left:2px;top:511px;width:25px;height:1px;background:#c6c6c6;"></div>
<div class="b" style="left:2px;top:511px;width:25px;height:1px;background:#cccccc;"></div>
<div class="b" style="left:2px;top:527px;width:25px;height:1px;background:#c6c6c6;"></div>
<div class="b" style="left:2px;top:527px;width:25px;height:1px;background:#cccccc;"></div>
<div class="b" style="left:149px;top:497px;width:1px;height:20px;background:#d4d4d4;"></div>
<div class="b" style="left:268px;top:497px;width:1px;height:20px;background:#d4d4d4;"></div>
<div class="b" style="left:366px;top:497px;width:1px;height:20px;background:#d4d4d4;"></div>
<div class="b" style="left:493px;top:497px;width:1px;height:20px;background:#d4d4d4;"></div>
<div class="b" style="left:645px;top:497px;width:1px;height:20px;background:#d4d4d4;"></div>
<div class="b" style="left:774px;top:497px;width:1px;height:20px;background:#d4d4d4;"></div>
<div class="b" style="left:903px;top:497px;width:1px;height:20px;background:#d4d4d4;"></div>
<div class="b" style="left:964px;top:497px;width:1px;height:20px;background:#d4d4d4;"></div>
<div class="b" style="left:1029px;top:497px;width:1px;height:20px;background:#d4d4d4;"></div>
<div class="b" style="left:1069px;top:497px;width:1px;height:20px;background:#d4d4d4;"></div>
<div class="b" style="left:1124px;top:497px;width:1px;height:20px;background:#d4d4d4;"></div>
<div class="b" style="left:1267px;top:497px;width:1px;height:20px;background:#d4d4d4;"></div>
<div class="b" style="left:1448px;top:497px;width:1px;height:20px;background:#d4d4d4;"></div>
<div class="b" style="left:28px;top:511px;width:1425px;height:1px;background:#d4d4d4;"></div>
<div class="b" style="left:1449px;top:255px;width:4px;height:1px;background:#d4d4d4;"></div>
<div class="b" style="left:1449px;top:286px;width:4px;height:1px;background:#d4d4d4;"></div>
<div class="b" style="left:1449px;top:320px;width:4px;height:1px;background:#d4d4d4;"></div>
<div class="b" style="left:1449px;top:353px;width:4px;height:1px;background:#d4d4d4;"></div>
<div class="b" style="left:1449px;top:389px;width:4px;height:1px;background:#d4d4d4;"></div>
<div class="b" style="left:1449px;top:425px;width:4px;height:1px;background:#d4d4d4;"></div>
<div class="b" style="left:268px;top:255px;width:99px;height:32px;border:1px solid #000;"></div>
<div class="b" style="left:366px;top:255px;width:128px;height:32px;border:1px solid #000;"></div>
<div class="b" style="left:493px;top:255px;width:153px;height:32px;border:1px solid #000;"></div>
<div class="b" style="left:645px;top:255px;width:130px;height:32px;border:1px solid #000;"></div>
<div class="b" style="left:268px;top:286px;width:99px;height:35px;border:1px solid #000;"></div>
<div class="b" style="left:366px;top:286px;width:409px;height:35px;border:1px solid #000;"></div>
<div class="b" style="left:268px;top:320px;width:99px;height:34px;border:1px solid #000;"></div>
<div class="b" style="left:366px;top:320px;width:409px;height:34px;border:1px solid #000;"></div>
<div class="b" style="left:268px;top:353px;width:99px;height:37px;border:1px solid #000;"></div>
<div class="b" style="left:366px;top:353px;width:409px;height:37px;border:1px solid #000;"></div>
<div class="b" style="left:268px;top:389px;width:99px;height:37px;border:1px solid #000;"></div>
<div class="b" style="left:366px;top:389px;width:409px;height:37px;border:1px solid #000;"></div>
<div class="b" style="left:45px;top:255px;width:73px;height:72px;overflow:hidden;background:linear-gradient(180deg,#5cabd8 0%,#3a9fd4 100%);"><div class="b" style="left:8px;top:0;width:66px;height:73px;border-top-left-radius:27px 20px;background:linear-gradient(132deg,#d3e9f5 0%,#b3daef 19%,#82c4e5 44%,#43aad9 72%,#1698cf 100%);"></div><span class="t" style="left:11.8px;top:42px;font-size:32px;color:#fff;-webkit-text-stroke:1.5px #fff;line-height:36px;"><span style="display:inline-block;transform:scaleX(0.66);transform-origin:0 0;margin-right:-6.85px;">F</span>low</span></div>
<div class="b" style="left:1447px;top:230px;width:2px;height:216px;background:#000;"></div>
<div class="b" style="left:150px;top:448px;width:1303px;height:47px;background:#c6c6c6;"></div>
<div class="b" style="left:148px;top:449px;width:2px;height:45px;background:#000;"></div>
<div class="b" style="left:267px;top:449px;width:2px;height:45px;background:#000;"></div>
<div class="b" style="left:365px;top:449px;width:2px;height:45px;background:#000;"></div>
<div class="b" style="left:492px;top:449px;width:2px;height:45px;background:#000;"></div>
<div class="b" style="left:644px;top:449px;width:2px;height:45px;background:#000;"></div>
<div class="b" style="left:773px;top:449px;width:2px;height:45px;background:#000;"></div>
<div class="b" style="left:903px;top:449px;width:2px;height:45px;background:#000;"></div>
<div class="b" style="left:963px;top:449px;width:2px;height:45px;background:#000;"></div>
<div class="b" style="left:1028px;top:449px;width:2px;height:45px;background:#000;"></div>
<div class="b" style="left:1068px;top:449px;width:2px;height:45px;background:#000;"></div>
<div class="b" style="left:1123px;top:449px;width:2px;height:45px;background:#000;"></div>
<div class="b" style="left:1266px;top:449px;width:2px;height:45px;background:#000;"></div>
<div class="b" style="left:1447px;top:449px;width:2px;height:45px;background:#000;"></div>
<div class="b" style="left:26px;top:446px;width:1431px;height:51px;border:2px solid #217346;"></div>
<div class="b" style="left:26px;top:493px;width:6px;height:5px;background:#217346;"></div>
<div class="b" style="left:32px;top:495px;width:1px;height:2px;background:#fff;"></div>
<div class="b" style="left:-1px;top:148px;width:183px;height:42px;border:4px solid #7f0408;"></div>
<svg class="b" style="left:0px;top:195px;" width="80" height="280" viewBox="0 0 80 280"><path d="M12.9 273 L58.8 29.5" stroke="#800004" stroke-width="4" fill="none"/><path d="M62.5 10.2 L68.6 31.4 L49 27.600Z" fill="#800004"/></svg>
<span class="t" style="top:9px;font-size:12px;color:#444444;transform:scaleX(0.9643);transform-origin:0 0;left:745px;">Structurelist.xlsx  [Read-Only] - Excel</span>
<span class="t" style="top:34.5px;font-size:12px;color:#fff;transform:scaleX(0.8365);transform-origin:0 0;left:20.8px;">FILE</span>
<span class="t" style="top:34.5px;font-size:12px;color:#217346;transform:scaleX(0.9583);transform-origin:0 0;left:78.5px;">HOME</span>
<span class="t" style="top:34.5px;font-size:12px;color:#444444;transform:scaleX(0.8676);transform-origin:0 0;left:141.5px;">INSERT</span>
<span class="t" style="top:34.5px;font-size:12px;color:#444444;transform:scaleX(0.9213);transform-origin:0 0;left:209.3px;">PAGE LAYOUT</span>
<span class="t" style="top:34.5px;font-size:12px;color:#444444;transform:scaleX(0.9102);transform-origin:0 0;left:315.3px;">FORMULAS</span>
<span class="t" style="top:34.5px;font-size:12px;color:#444444;letter-spacing:0.016px;left:405.7px;">DATA</span>
<span class="t" style="top:34.5px;font-size:12px;color:#444444;transform:scaleX(0.8238);transform-origin:0 0;left:465.7px;">REVIEW</span>
<span class="t" style="top:34.5px;font-size:12px;color:#444444;transform:scaleX(0.8705);transform-origin:0 0;left:534px;">VIEW</span>
<span class="t" style="top:131px;font-size:12px;color:#666666;transform:scaleX(0.9693);transform-origin:0 0;left:47.7px;">Clipboard</span>
<span class="t" style="top:131px;font-size:12px;color:#666666;transform:scaleX(0.9660);transform-origin:0 0;left:243.4px;">Font</span>
<span class="t" style="top:131px;font-size:12px;color:#666666;transform:scaleX(0.9836);transform-origin:0 0;left:464px;">Alignment</span>
<span class="t" style="top:131px;font-size:12px;color:#666666;transform:scaleX(0.9324);transform-origin:0 0;left:673px;">Number</span>
<span class="t" style="top:131px;font-size:12px;color:#666666;transform:scaleX(0.8627);transform-origin:0 0;left:941.3px;">Styles</span>
<span class="t" style="top:131px;font-size:12px;color:#666666;transform:scaleX(0.8623);transform-origin:0 0;left:1198px;">Cells</span>
<span class="t" style="top:131px;font-size:12px;color:#666666;letter-spacing:-0.058px;left:1352.2px;">Editing</span>
<span class="t" style="top:96px;font-size:12px;color:#444444;transform:scaleX(0.9059);transform-origin:0 0;left:13.4px;">Paste</span>
<span class="t" style="top:61.599999999999994px;font-size:12px;color:#444444;transform:scaleX(0.9739);transform-origin:0 0;left:70.6px;">Cut</span>
<span class="t" style="top:85px;font-size:12px;color:#444444;transform:scaleX(0.9602);transform-origin:0 0;left:70.6px;">Copy</span>
<span class="t" style="top:107.5px;font-size:12px;color:#444444;transform:scaleX(0.9753);transform-origin:0 0;left:70.6px;">Format Painter</span>
<span class="t" style="top:70px;font-size:12px;color:#000;letter-spacing:-0.063px;left:167px;">Arial</span>
<span class="t" style="top:70px;font-size:12px;color:#000;left:277.5px;">9</span>
<span class="t" style="top:69px;font-size:14px;color:#444444;left:324.2px;">A</span>
<span class="t" style="top:72px;font-size:11.5px;color:#444444;left:347.1px;">A</span>
<span class="t" style="top:100px;font-size:12.5px;color:#3a3a3a;font-weight:700;left:170.7px;">B</span>
<span class="t" style="top:99px;font-size:13.5px;color:#444444;font-weight:700;font-style:italic;left:193.5px;font-family:'Liberation Serif',serif;">I</span>
<span class="t" style="top:99.5px;font-size:12px;color:#444444;font-weight:700;left:214px;text-decoration:underline;text-underline-offset:1.500px;">U</span>
<span class="t" style="top:98px;font-size:14px;color:#444444;left:334.7px;-webkit-text-stroke:0.350px #444;">A</span>
<span class="t" style="top:70px;font-size:12px;color:#444444;transform:scaleX(0.9705);transform-origin:0 0;left:521.7px;">Wrap Text</span>
<span class="t" style="top:100.6px;font-size:12px;color:#444444;letter-spacing:-0.029px;left:521.7px;">Merge &amp; Center</span>
<span class="t" style="top:70px;font-size:12px;color:#000;transform:scaleX(0.9811);transform-origin:0 0;left:638.4px;">Text</span>
<span class="t" style="top:98.7px;font-size:15.5px;color:#444444;transform:scaleX(0.9133);transform-origin:0 0;left:674.4px;">%</span>
<span class="t" style="top:86px;font-size:22px;color:#444444;font-weight:700;left:698.6px;font-family:'Liberation Serif',serif;">,</span>
<span class="t" style="top:96px;font-size:12px;color:#444444;letter-spacing:0.114px;left:780.7px;">Conditional</span>
<span class="t" style="top:112px;font-size:12px;color:#444444;letter-spacing:0.054px;left:777.7px;">Formatting</span>
<span class="t" style="top:96px;font-size:12px;color:#444444;transform:scaleX(0.9497);transform-origin:0 0;left:849.5px;">Format as</span>
<span class="t" style="top:112px;font-size:12px;color:#444444;letter-spacing:0.062px;left:857.5px;">Table</span>
<span class="t" style="top:69px;font-size:12px;color:#000;letter-spacing:0.238px;left:913.4px;">Normal</span>
<span class="t" style="top:69px;font-size:12px;color:#9c0006;letter-spacing:0.047px;left:1019.8px;">Bad</span>
<span class="t" style="top:97px;font-size:12px;color:#006100;transform:scaleX(1.0933);transform-origin:0 0;left:913.4px;">Good</span>
<span class="t" style="top:97px;font-size:12px;color:#9c6500;transform:scaleX(1.1761);transform-origin:0 0;left:1019.8px;">Neutral</span>
<span class="t" style="top:96px;font-size:12px;color:#444444;transform:scaleX(0.9595);transform-origin:0 0;left:1152px;">Insert</span>
<span class="t" style="top:96px;font-size:12px;color:#444444;transform:scaleX(0.9369);transform-origin:0 0;left:1192.5px;">Delete</span>
<span class="t" style="top:96px;font-size:12px;color:#444444;transform:scaleX(0.9812);transform-origin:0 0;left:1232.5px;">Format</span>
<span class="t" style="top:56.7px;font-size:20px;color:#444;transform:scaleX(1.2121);transform-origin:0 0;left:1285.2px;-webkit-text-stroke:0.550px #444;">Σ</span>
<span class="t" style="top:62px;font-size:12px;color:#444444;letter-spacing:-0.008px;left:1304.3px;">AutoSum</span>
<span class="t" style="top:85px;font-size:12px;color:#444444;transform:scaleX(0.9394);transform-origin:0 0;left:1304.3px;">Fill</span>
<span class="t" style="top:108px;font-size:12px;color:#444444;transform:scaleX(0.9307);transform-origin:0 0;left:1304.3px;">Clear</span>
<span class="t" style="top:60.599999999999994px;font-size:16px;color:#3a7abf;transform:scaleX(1.0589);transform-origin:0 0;left:1380px;-webkit-text-stroke:0.3px #3a7abf;">A</span>
<span class="t" style="top:75px;font-size:16px;color:#9a57b8;letter-spacing:-0.081px;left:1381px;-webkit-text-stroke:0.3px #9a57b8;">Z</span>
<span class="t" style="top:96px;font-size:12px;color:#444444;letter-spacing:-0.010px;left:1378.2px;">Sort &amp;</span>
<span class="t" style="top:112px;font-size:12px;color:#444444;transform:scaleX(0.9336);transform-origin:0 0;left:1378.6px;">Filter</span>
<span class="t" style="top:96px;font-size:12px;color:#444444;letter-spacing:-0.031px;left:1420.5px;">Find &amp;</span>
<span class="t" style="top:112px;font-size:12px;color:#444444;transform:scaleX(0.9233);transform-origin:0 0;left:1418px;">Select</span>
<span class="t" style="top:164px;font-size:12px;color:#444444;transform:scaleX(0.9646);transform-origin:0 0;left:14px;">REPORT_FIELDS</span>
<span class="t" style="top:155.5px;font-size:24px;color:#5a5a5a;font-weight:700;font-style:italic;transform:scaleX(0.9000);transform-origin:0 0;left:427px;font-family:'Liberation Serif',serif;">fx</span>
<span class="t" style="top:163px;font-size:13.5px;color:#444444;transform:scaleX(0.8762);transform-origin:0 0;left:470.7px;">Osa</span>
<span class="t" style="top:163px;font-size:13.5px;color:#444444;letter-spacing:-0.041px;left:571.4px;">Part</span>
<span class="t" style="top:214px;font-size:13px;color:#217346;left:-62.0px;width:300px;text-align:center;-webkit-text-stroke:0.350px #217346;">A</span>
<span class="t" style="top:214px;font-size:13px;color:#217346;left:58.5px;width:300px;text-align:center;-webkit-text-stroke:0.350px #217346;">B</span>
<span class="t" style="top:214px;font-size:13px;color:#217346;left:167.0px;width:300px;text-align:center;-webkit-text-stroke:0.350px #217346;">C</span>
<span class="t" style="top:214px;font-size:13px;color:#217346;left:279.5px;width:300px;text-align:center;-webkit-text-stroke:0.350px #217346;">D</span>
<span class="t" style="top:214px;font-size:13px;color:#217346;left:419.0px;width:300px;text-align:center;-webkit-text-stroke:0.350px #217346;">E</span>
<span class="t" style="top:214px;font-size:13px;color:#217346;left:559.5px;width:300px;text-align:center;-webkit-text-stroke:0.350px #217346;">F</span>
<span class="t" style="top:214px;font-size:13px;color:#217346;left:688.0px;width:300px;text-align:center;-webkit-text-stroke:0.350px #217346;">G</span>
<span class="t" style="top:214px;font-size:13px;color:#217346;left:784.5px;width:300px;text-align:center;-webkit-text-stroke:0.350px #217346;">I</span>
<span class="t" style="top:214px;font-size:13px;color:#217346;left:846.5px;width:300px;text-align:center;-webkit-text-stroke:0.350px #217346;">J</span>
<span class="t" style="top:214px;font-size:13px;color:#217346;left:899.0px;width:300px;text-align:center;-webkit-text-stroke:0.350px #217346;">K</span>
<span class="t" style="top:214px;font-size:13px;color:#217346;left:946.5px;width:300px;text-align:center;-webkit-text-stroke:0.350px #217346;">L</span>
<span class="t" style="top:214px;font-size:13px;color:#217346;left:1045.5px;width:300px;text-align:center;-webkit-text-stroke:0.350px #217346;">M</span>
<span class="t" style="top:214px;font-size:13px;color:#217346;left:1207.5px;width:300px;text-align:center;-webkit-text-stroke:0.350px #217346;">N</span>
<span class="t" style="top:240px;font-size:13px;color:#444444;left:-135px;width:300px;text-align:center;">1</span>
<span class="t" style="top:269.5px;font-size:13px;color:#444444;left:-135px;width:300px;text-align:center;">2</span>
<span class="t" style="top:305px;font-size:13px;color:#444444;left:-135px;width:300px;text-align:center;">3</span>
<span class="t" style="top:338.5px;font-size:13px;color:#444444;left:-135px;width:300px;text-align:center;">4</span>
<span class="t" style="top:374px;font-size:13px;color:#444444;left:-135px;width:300px;text-align:center;">5</span>
<span class="t" style="top:410px;font-size:13px;color:#444444;left:-135px;width:300px;text-align:center;">6</span>
<span class="t" style="top:431px;font-size:13px;color:#444444;left:-135px;width:300px;text-align:center;">7</span>
<span class="t" style="top:479px;font-size:13px;color:#217346;left:-135px;width:300px;text-align:center;">8</span>
<span class="t" style="top:495.5px;font-size:13px;color:#444444;left:-135px;width:300px;text-align:center;">9</span>
<span class="t" style="top:511px;font-size:13px;color:#444444;left:-135px;width:300px;text-align:center;">10</span>
<span class="t" style="top:257px;font-size:12px;color:#000;font-weight:700;left:167.5px;width:300px;text-align:center;">Tunnus</span>
<span class="t" style="top:272.5px;font-size:12px;color:#000;font-weight:700;left:167.5px;width:300px;text-align:center;">Item</span>
<span class="t" style="top:289px;font-size:12px;color:#000;font-weight:700;left:167.5px;width:300px;text-align:center;">Kuvaus</span>
<span class="t" style="top:305px;font-size:12px;color:#000;font-weight:700;left:167.5px;width:300px;text-align:center;">Desciption</span>
<span class="t" style="top:322px;font-size:12px;color:#000;font-weight:700;left:167.5px;width:300px;text-align:center;">Kuvaus 2</span>
<span class="t" style="top:338px;font-size:12px;color:#000;font-weight:700;left:167.5px;width:300px;text-align:center;">Description 2</span>
<span class="t" style="top:357px;font-size:12px;color:#000;font-weight:700;left:167.5px;width:300px;text-align:center;">Kuvaus EN</span>
<span class="t" style="top:373px;font-size:12px;color:#000;font-weight:700;left:167.5px;width:300px;text-align:center;">Desciption EN</span>
<span class="t" style="top:393px;font-size:12px;color:#000;font-weight:700;left:167.5px;width:300px;text-align:center;">Tila</span>
<span class="t" style="top:409px;font-size:12px;color:#000;font-weight:700;left:167.5px;width:300px;text-align:center;">State</span>
<span class="t" style="top:264px;font-size:12px;color:#000;font-weight:700;left:419px;width:300px;text-align:center;">Rev.</span>
<span class="t" style="top:262.5px;font-size:20px;color:#000;font-weight:700;font-style:italic;transform:scaleX(1.0610);transform-origin:0 0;left:124px;">Rakennelista:</span>
<span class="t" style="top:303px;font-size:16px;color:#000;transform:scaleX(0.9458);transform-origin:0 0;left:153.2px;">Structure list:</span>
<span class="t" style="top:245.60000000000002px;font-size:14px;color:#8a1818;letter-spacing:0.322px;left:832.0px;-webkit-text-stroke:0.150px #8a1818;">Päänimikkeen tiedot</span>
<span class="t" style="top:265.2px;font-size:14px;color:#8a1818;transform:scaleX(0.9092);transform-origin:0 0;left:832.0px;-webkit-text-stroke:0.150px #8a1818;">PARENT_OBJCODE</span>
<span class="t" style="top:284.8px;font-size:14px;color:#8a1818;transform:scaleX(0.9169);transform-origin:0 0;left:832.0px;-webkit-text-stroke:0.150px #8a1818;">PARENT_EXTVCID</span>
<span class="t" style="top:304.4px;font-size:14px;color:#8a1818;transform:scaleX(0.8947);transform-origin:0 0;left:832.0px;-webkit-text-stroke:0.150px #8a1818;">PARENT_DESCR</span>
<span class="t" style="top:343.6px;font-size:14px;color:#8a1818;transform:scaleX(0.9071);transform-origin:0 0;left:832.0px;-webkit-text-stroke:0.150px #8a1818;">PARENT_DESCR2_FI</span>
<span class="t" style="top:363.2px;font-size:14px;color:#8a1818;transform:scaleX(0.9128);transform-origin:0 0;left:832.0px;-webkit-text-stroke:0.150px #8a1818;">PARENT_DESCR1_EN</span>
<span class="t" style="top:402.4px;font-size:14px;color:#8a1818;transform:scaleX(0.9157);transform-origin:0 0;left:832.0px;-webkit-text-stroke:0.150px #8a1818;">PARENT_STATE.STATENAME</span>
<span class="t" style="top:456.5px;font-size:12px;color:#000;font-weight:700;left:-62px;width:300px;text-align:center;">Osa</span>
<span class="t" style="top:472.5px;font-size:12px;color:#000;font-weight:700;left:-62px;width:300px;text-align:center;">Part</span>
<span class="t" style="top:456.5px;font-size:12px;color:#000;font-weight:700;left:58.5px;width:300px;text-align:center;">Tunnus</span>
<span class="t" style="top:472.5px;font-size:12px;color:#000;font-weight:700;left:58.5px;width:300px;text-align:center;">Item</span>
<span class="t" style="top:456.5px;font-size:12px;color:#000;font-weight:700;left:279.5px;width:300px;text-align:center;">Kuvaus</span>
<span class="t" style="top:472.5px;font-size:12px;color:#000;font-weight:700;left:279.5px;width:300px;text-align:center;">Description</span>
<span class="t" style="top:456.5px;font-size:12px;color:#000;font-weight:700;left:419px;width:300px;text-align:center;">Kuvaus 2</span>
<span class="t" style="top:472.5px;font-size:12px;color:#000;font-weight:700;left:419px;width:300px;text-align:center;">Description 2</span>
<span class="t" style="top:456.5px;font-size:12px;color:#000;font-weight:700;left:559.5px;width:300px;text-align:center;">Kuvaus EN</span>
<span class="t" style="top:472.5px;font-size:12px;color:#000;font-weight:700;left:559.5px;width:300px;text-align:center;">Description EN</span>
<span class="t" style="top:456.5px;font-size:12px;color:#000;font-weight:700;left:688.5px;width:300px;text-align:center;">Tila</span>
<span class="t" style="top:472.5px;font-size:12px;color:#000;font-weight:700;left:688.5px;width:300px;text-align:center;">Status</span>
<span class="t" style="top:456.5px;font-size:12px;color:#000;font-weight:700;left:784px;width:300px;text-align:center;">Kpl</span>
<span class="t" style="top:472.5px;font-size:12px;color:#000;font-weight:700;left:784px;width:300px;text-align:center;">Qty</span>
<span class="t" style="top:456.5px;font-size:12px;color:#000;font-weight:700;left:899px;width:300px;text-align:center;">Yks.</span>
<span class="t" style="top:472.5px;font-size:12px;color:#000;font-weight:700;left:899px;width:300px;text-align:center;">Unit</span>
<span class="t" style="top:456.5px;font-size:12px;color:#000;font-weight:700;left:1045.5px;width:300px;text-align:center;">Mitat</span>
<span class="t" style="top:472.5px;font-size:12px;color:#000;font-weight:700;left:1045.5px;width:300px;text-align:center;">Dimensions</span>
<span class="t" style="top:456.5px;font-size:12px;color:#000;font-weight:700;left:1207.5px;width:300px;text-align:center;">Materiaali</span>
<span class="t" style="top:472.5px;font-size:12px;color:#000;font-weight:700;left:1207.5px;width:300px;text-align:center;">Material</span>
<span class="t" style="top:464.5px;font-size:12px;color:#000;font-weight:700;left:167px;width:300px;text-align:center;">Rev.</span>
<span class="t" style="top:448.5px;font-size:12px;color:#000;font-weight:700;left:846.5px;width:300px;text-align:center;">Määrä /</span>
<span class="t" style="top:464.5px;font-size:12px;color:#000;font-weight:700;left:846.5px;width:300px;text-align:center;">kpl Qty /</span>
<span class="t" style="top:480.5px;font-size:12px;color:#000;font-weight:700;left:846.5px;width:300px;text-align:center;">Part</span>
<span class="t" style="top:448.5px;font-size:12px;color:#000;font-weight:700;left:946.5px;width:300px;text-align:center;">Paino</span>
<span class="t" style="top:464.5px;font-size:12px;color:#000;font-weight:700;left:946.5px;width:300px;text-align:center;">Weight</span>
<span class="t" style="top:480.5px;font-size:12px;color:#000;font-weight:700;left:946.5px;width:300px;text-align:center;">Kg</span>
</body></html>
